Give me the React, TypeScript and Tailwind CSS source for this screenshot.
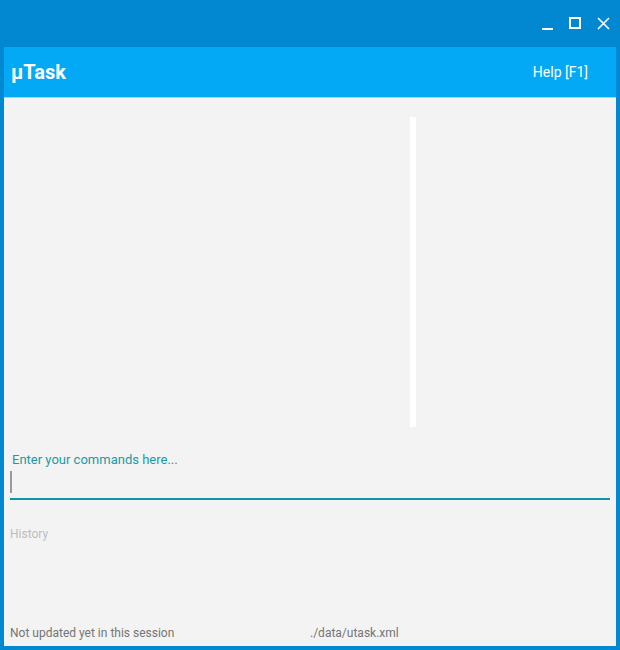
import React from "react";

const WindowControls = () => (
  <div className="flex items-start pr-[10px] pt-[17px] gap-[15px]">
    <svg width="13" height="13" viewBox="0 0 13 13">
      <rect x="1" y="11" width="11" height="2" fill="#ffffff" />
    </svg>
    <svg width="13" height="13" viewBox="0 0 13 13">
      <rect x="1" y="1" width="10" height="10" fill="none" stroke="#ffffff" strokeWidth="2" />
    </svg>
    <svg width="13" height="13" viewBox="0 0 13 13">
      <path d="M1 1 L12 12 M12 1 L1 12" stroke="#ffffff" strokeWidth="1.6" fill="none" />
    </svg>
  </div>
);

export default function App() {
  return (
    <div
      className="w-[620px] h-[650px] bg-[#0288d1] flex flex-col overflow-hidden"
      style={{ fontFamily: "Roboto, 'Liberation Sans', sans-serif" }}
    >
      {/* title bar */}
      <div className="h-[47px] flex justify-end items-start shrink-0">
        <WindowControls />
      </div>

      <div className="mx-[4px] h-[599px] bg-[#f3f3f3] flex flex-col">
        {/* app header */}
        <div className="h-[51px] bg-[#03a9f4] border-b border-[#9fd8f5] flex items-center justify-between pl-[7px] pr-[28px] shrink-0">
          <span className="text-white text-[20px] font-bold leading-none">μTask</span>
          <span className="text-white text-[14px] leading-none">Help [F1]</span>
        </div>

        {/* task area */}
        <div className="h-[354px] flex pt-[19px] shrink-0">
          <div className="w-[406px]" />
          <div className="w-[6px] h-[310px] bg-white" />
        </div>

        {/* command input */}
        <div className="px-[6px]">
          <div className="pl-[2px] text-[13px] leading-[16px] text-[#1a9aa6]">Enter your commands here...</div>
          <div className="h-[32px] border-b-2 border-[#0a98a6] flex items-end pb-[5px]">
            <div className="w-[2px] h-[22px] bg-[#9a9a9a]" />
          </div>
        </div>

        <div className="px-[6px] pt-[26px] text-[12px] leading-[16px] text-[#bdbdbd]">History</div>

        {/* footer */}
        <div className="mt-auto mb-[5px] px-[6px] flex text-[12px] leading-[16px] text-[#757575]">
          <div className="w-[300px]">Not updated yet in this session</div>
          <div>./data/utask.xml</div>
        </div>
      </div>
    </div>
  );
}
